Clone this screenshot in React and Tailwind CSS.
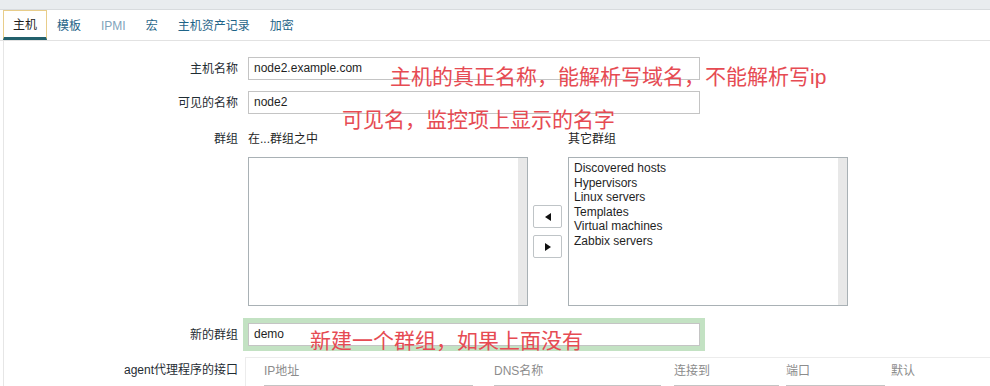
const font = { fontFamily: '"Liberation Sans", Arial, "Noto Sans CJK SC", sans-serif' };

const tabs = [
  { label: '主机', active: true },
  { label: '模板' },
  { label: 'IPMI', muted: true },
  { label: '宏' },
  { label: '主机资产记录' },
  { label: '加密' },
];

const otherGroups = [
  'Discovered hosts',
  'Hypervisors',
  'Linux servers',
  'Templates',
  'Virtual machines',
  'Zabbix servers',
];

function Label({ children, className = '' }) {
  return (
    <div className={`w-[234px] shrink-0 text-right text-[12px] text-[#1f2c33] ${className}`}>
      {children}
    </div>
  );
}

function TextInput({ value, className = '' }) {
  return (
    <div
      className={`h-[23px] w-[452px] border border-[#c4c4c4] bg-white px-[5px] text-[12px] leading-[21px] text-[#1f1f1f] ${className}`}
    >
      {value}
    </div>
  );
}

function ListBox({ items = [] }) {
  return (
    <div className="flex h-[149px] w-[280px] border border-[#a9b1b5] bg-white">
      <div className="flex-1 px-[5px] pt-[3px] text-[12px] leading-[14.5px] text-[#1f1f1f]">
        {items.map((it) => (
          <div key={it}>{it}</div>
        ))}
      </div>
      <div className="w-[9px] bg-[#e8e8e8]" />
    </div>
  );
}

function Note({ children, className }) {
  return (
    <span className={`pointer-events-none absolute whitespace-nowrap text-[21px] leading-[22px] text-[#e64b53] ${className}`}>
      {children}
    </span>
  );
}

export default function App() {
  return (
    <div className="relative h-[386px] w-[990px] overflow-hidden bg-white" style={font}>
      <div className="h-[10px] border-b border-[#d8dbde] bg-[#e9ecef]" />

      <nav className="flex h-[31px] items-stretch border-b border-[#e2e2e2] pl-[3px]">
        {tabs.map((t) =>
          t.active ? (
            <div
              key={t.label}
              className="flex items-center border border-b-[3px] border-[#e8cd8a] border-b-[#22606c] px-[9px] pt-[1px] text-[12px] text-[#1f1f1f]"
            >
              {t.label}
            </div>
          ) : (
            <div
              key={t.label}
              className={`flex items-center px-[10px] pt-[1px] text-[12px] ${t.muted ? 'text-[#7fa3bb]' : 'text-[#1e6488]'}`}
            >
              {t.label}
            </div>
          )
        )}
      </nav>

      <div className="ml-[3px] h-full border-l border-[#e6e6e6] pt-[16px]">
        <div className="flex items-center gap-[10px]">
          <Label>主机名称</Label>
          <TextInput value="node2.example.com" />
        </div>

        <div className="mt-[11px] flex items-center gap-[10px]">
          <Label>可见的名称</Label>
          <TextInput value="node2" />
        </div>

        <div className="mt-[18px] flex gap-[10px]">
          <Label className="leading-[14px]">群组</Label>
          <div>
            <div className="flex text-[12px] leading-[14px] text-[#1f1f1f]">
              <div className="w-[320px]">在...群组之中</div>
              <div>其它群组</div>
            </div>
            <div className="mt-[11px] flex items-center">
              <ListBox />
              <div className="mx-[5px] flex flex-col gap-[7px]">
                <button className="flex h-[23px] w-[29px] items-center justify-center rounded-[2px] border border-[#bfc4c7] bg-white">
                  <svg width="6" height="8" viewBox="0 0 6 8">
                    <path d="M6 0 L0 4 L6 8 Z" fill="#111" />
                  </svg>
                </button>
                <button className="flex h-[23px] w-[29px] items-center justify-center rounded-[2px] border border-[#bfc4c7] bg-white">
                  <svg width="6" height="8" viewBox="0 0 6 8">
                    <path d="M0 0 L6 4 L0 8 Z" fill="#111" />
                  </svg>
                </button>
              </div>
              <div className="ml-[1px]">
                <ListBox items={otherGroups} />
              </div>
            </div>
          </div>
        </div>

        <div className="mt-[17px] flex items-center gap-[10px]">
          <Label>新的群组</Label>
          <TextInput value="demo" className="border-[#a9c9a9] ring-[5px] ring-[#c3e2c3]" />
        </div>

        <div className="mt-[11px] flex gap-[7px]">
          <Label className="pt-[6px] leading-[14px]">agent代理程序的接口</Label>
          <div className="flex-1 border-t border-l border-[#ececec] pl-[18px] pt-[6px]">
            <div className="flex text-[12px] leading-[14px] text-[#8c8c8c]">
              <div className="w-[230px]">IP地址</div>
              <div className="w-[180px]">DNS名称</div>
              <div className="w-[112px]">连接到</div>
              <div className="w-[105px]">端口</div>
              <div>默认</div>
            </div>
            <div className="mt-[7px] flex">
              <div className="mr-[21px] h-[23px] w-[209px] border border-[#c4c4c4]" />
              <div className="mr-[13px] h-[23px] w-[167px] border border-[#c4c4c4]" />
              <div className="mr-[7px] flex h-[23px] w-[105px] border border-[#c4c4c4]">
                <div className="w-[59px] bg-[#76858d]" />
              </div>
              <div className="h-[23px] w-[99px] border border-[#c4c4c4]" />
            </div>
          </div>
        </div>
      </div>

      <Note className="left-[390px] top-[66px]">主机的真正名称，能解析写域名，不能解析写ip</Note>
      <Note className="left-[342px] top-[109px]">可见名，监控项上显示的名字</Note>
      <Note className="left-[310px] top-[330px]">新建一个群组，如果上面没有</Note>
    </div>
  );
}
